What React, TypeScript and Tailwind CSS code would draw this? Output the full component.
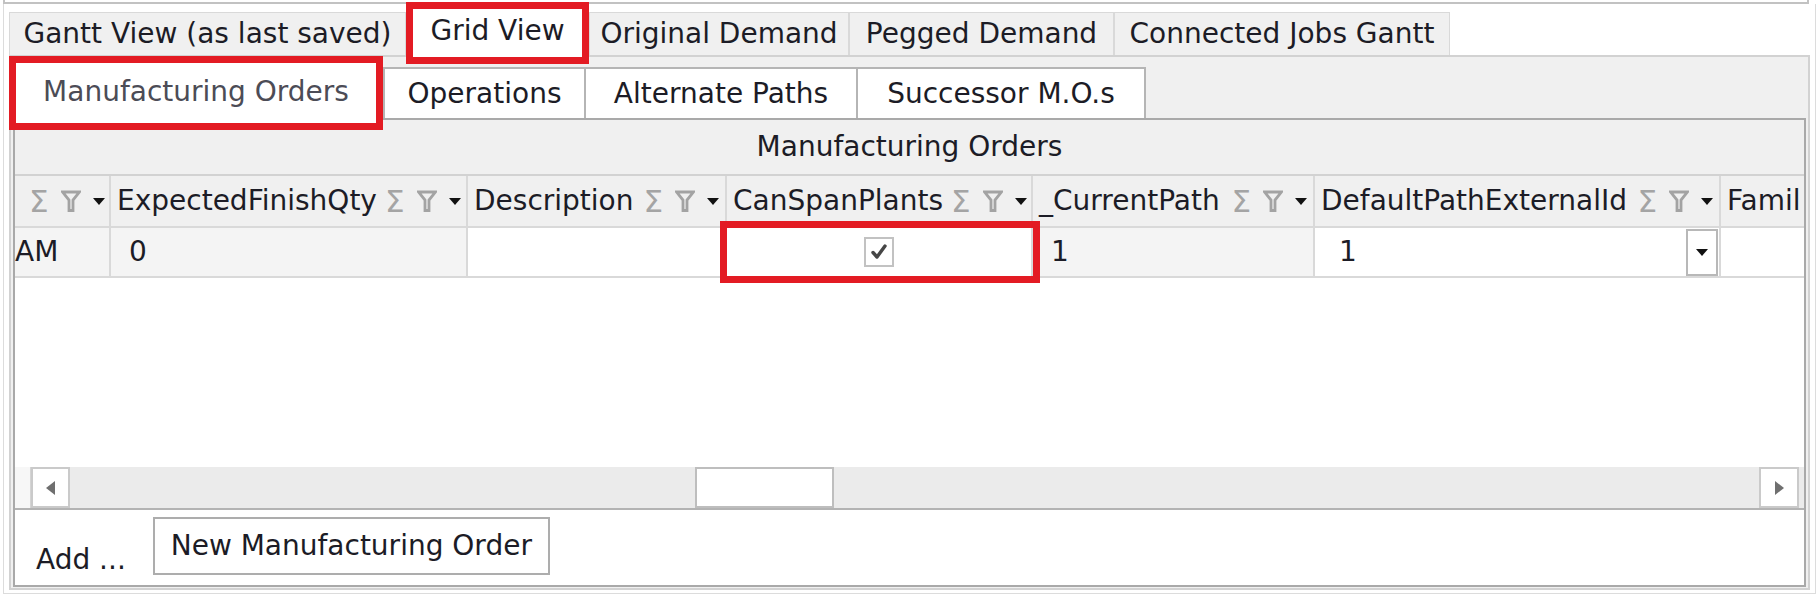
import clsx from "clsx";

const topTabs = [
  { label: "Gantt View (as last saved)", w: "w-[397px]" },
  { label: "Grid View", w: "w-[169px]", active: true },
  { label: "Original Demand", w: "w-[260px]" },
  { label: "Pegged Demand", w: "w-[265px]" },
  { label: "Connected Jobs Gantt", w: "w-[336px]" },
];

const subTabs = [
  { label: "Operations", w: "w-[203px]" },
  { label: "Alternate Paths", w: "w-[272px]" },
  { label: "Successor M.O.s", w: "w-[288px]" },
];

const columns = [
  { label: "", w: "w-[96px]" },
  { label: "ExpectedFinishQty", w: "w-[357px]" },
  { label: "Description", w: "w-[259px]" },
  { label: "CanSpanPlants", w: "w-[306px]" },
  { label: "_CurrentPath", w: "w-[282px]" },
  { label: "DefaultPathExternalId", w: "w-[406px]" },
];

function Funnel() {
  return (
    <svg width="20" height="24" viewBox="0 0 20 24" className="ml-[12px] shrink-0">
      <path d="M1.5 3 H18.5 L12 11 V21.5 H8 V11 Z" fill="none" stroke="#a3a3a3" strokeWidth="2.8" strokeLinejoin="miter" />
    </svg>
  );
}

function DownArrow({ className }: { className?: string }) {
  return (
    <svg width="12" height="7" viewBox="0 0 12 7" className={clsx("shrink-0", className)}>
      <polygon points="0,0 12,0 6,7" fill="#111" />
    </svg>
  );
}

function HeaderIcons() {
  return (
    <div className="ml-auto flex shrink-0 items-center pl-[8px]">
      <span className="text-[31px] leading-none text-[#a4a4a4]">Σ</span>
      <Funnel />
      <DownArrow className="ml-[12px]" />
    </div>
  );
}

function CheckBox() {
  return (
    <div className="flex h-[30px] w-[30px] items-center justify-center border-2 border-[#c2c2c2] bg-white">
      <svg width="20" height="20" viewBox="0 0 20 20">
        <path d="M4 10.5 L8 15 L16 4" fill="none" stroke="#464646" strokeWidth="3.4" strokeLinecap="round" strokeLinejoin="round" />
      </svg>
    </div>
  );
}

export default function App() {
  return (
    <div className="h-[608px] w-[1819px] overflow-hidden bg-white font-['DejaVu_Sans',sans-serif] text-[28px] text-[#1c1c26]">
      {/* bottom edge of the panel above */}
      <div className="ml-[3px] mr-[10px] h-[4px] border-x-2 border-b-2 border-[#c2c2c2]" />

      <div className="mx-[3px] border-x border-b border-[#dcdcdc] pb-[3px]">
        {/* main tab strip */}
        <div className="flex h-[51px] items-end pl-[5px]">
          {topTabs.map((t) =>
            t.active ? (
              <div
                key={t.label}
                className={clsx(
                  "relative z-10 mx-[7px] -mb-[2px] flex h-[48px] shrink-0 items-center justify-center bg-white pb-[4px] outline-[7px] outline-[#e31b23]",
                  t.w
                )}
              >
                {t.label}
              </div>
            ) : (
              <div
                key={t.label}
                className={clsx(
                  "flex h-[43px] shrink-0 items-center justify-center border-x border-t border-[#d9d9d9] bg-[#f0f0f0]",
                  t.w
                )}
              >
                {t.label}
              </div>
            )
          )}
        </div>

        {/* tab page */}
        <div className="mx-[5px] h-[535px] border-2 border-[#d2d2d2] bg-[#f0f0f0] p-px">
          {/* sub tabs */}
          <div className="flex h-[60px] items-end">
            <div className="relative z-10 ml-[4px] -mb-[5px] flex h-[60px] w-[360px] shrink-0 items-center justify-center bg-white pb-[2px] text-[#4c4c56] outline-[7px] outline-[#e31b23]">
              Manufacturing Orders
            </div>
            {subTabs.map((t, i) => (
              <div
                key={t.label}
                className={clsx(
                  "flex h-[51px] shrink-0 items-center justify-center border-t-2 border-r-2 border-[#b5b5b5] bg-white",
                  i === 0 && "ml-[7px] border-l-2",
                  t.w
                )}
              >
                {t.label}
              </div>
            ))}
          </div>

          {/* grid */}
          <div className="mx-px flex h-[469px] flex-col border-2 border-[#a9a9a9] bg-white">
            <div className="flex h-[54px] shrink-0 items-center justify-center bg-[#f0f0f0]">Manufacturing Orders</div>

            <div className="flex h-[52px] shrink-0 border-t-2 border-[#d2d2d2] bg-[#f0f0f0]">
              {columns.map((c) => (
                <div key={c.w + c.label} className={clsx("flex shrink-0 items-center border-r-2 border-[#d9d9d9] pr-[6px] pl-[6px]", c.w)}>
                  {c.label && <span className="whitespace-nowrap">{c.label}</span>}
                  <HeaderIcons />
                </div>
              ))}
              <div className="flex min-w-0 flex-1 items-center whitespace-nowrap pl-[6px]">Famil</div>
            </div>

            <div className="flex h-[52px] shrink-0 border-y-2 border-[#d9d9d9]">
              <div className="flex w-[96px] shrink-0 items-center overflow-hidden border-r-2 border-[#d9d9d9] bg-[#f4f4f4]">AM</div>
              <div className="flex w-[357px] shrink-0 items-center border-r-2 border-[#d9d9d9] bg-[#f4f4f4] pl-[18px]">0</div>
              <div className="w-[259px] shrink-0 border-r-2 border-[#d9d9d9]" />
              <div className="relative z-10 flex w-[306px] shrink-0 items-center justify-center border-r-2 border-[#d9d9d9] bg-white outline-[7px] outline-[#e31b23]">
                <CheckBox />
              </div>
              <div className="flex w-[282px] shrink-0 items-center border-r-2 border-[#d9d9d9] bg-[#f4f4f4] pl-[18px]">1</div>
              <div className="flex w-[406px] shrink-0 items-center border-r-2 border-[#d9d9d9] pl-[24px]">
                1
                <div className="mr-px ml-auto flex h-[47px] w-[32px] items-center justify-center self-end border-2 border-[#b8b8b8] bg-white">
                  <DownArrow />
                </div>
              </div>
              <div className="flex-1" />
            </div>

            <div className="flex-1" />

            {/* horizontal scrollbar */}
            <div className="flex h-[43px] shrink-0 border-b-2 border-[#b3b3b3] bg-[#ebebeb]">
              <div className="w-[16px] shrink-0 border-r border-[#d4d4d4] bg-[#f7f7f7]" />
              <div className="flex w-[39px] shrink-0 items-center justify-center border-2 border-[#cacaca] bg-white">
                <svg width="9" height="14" viewBox="0 0 9 14">
                  <polygon points="9,0 9,14 0,7" fill="#6f6f6f" />
                </svg>
              </div>
              <div className="ml-[625px] w-[139px] shrink-0 border-2 border-[#bebebe] bg-white" />
              <div className="flex-1" />
              <div className="flex w-[40px] shrink-0 items-center justify-center border-2 border-[#cacaca] bg-white">
                <svg width="9" height="14" viewBox="0 0 9 14">
                  <polygon points="0,0 0,14 9,7" fill="#6f6f6f" />
                </svg>
              </div>
              <div className="w-[5px] shrink-0" />
            </div>

            {/* add area */}
            <div className="flex h-[75px] shrink-0 items-start pl-[21px]">
              <div className="mt-[36px] leading-[28px]">Add ...</div>
              <button className="mt-[7px] ml-[27px] flex h-[58px] w-[397px] items-center justify-center border-2 border-[#adadad] bg-white">
                New Manufacturing Order
              </button>
            </div>
          </div>
        </div>
      </div>
    </div>
  );
}
